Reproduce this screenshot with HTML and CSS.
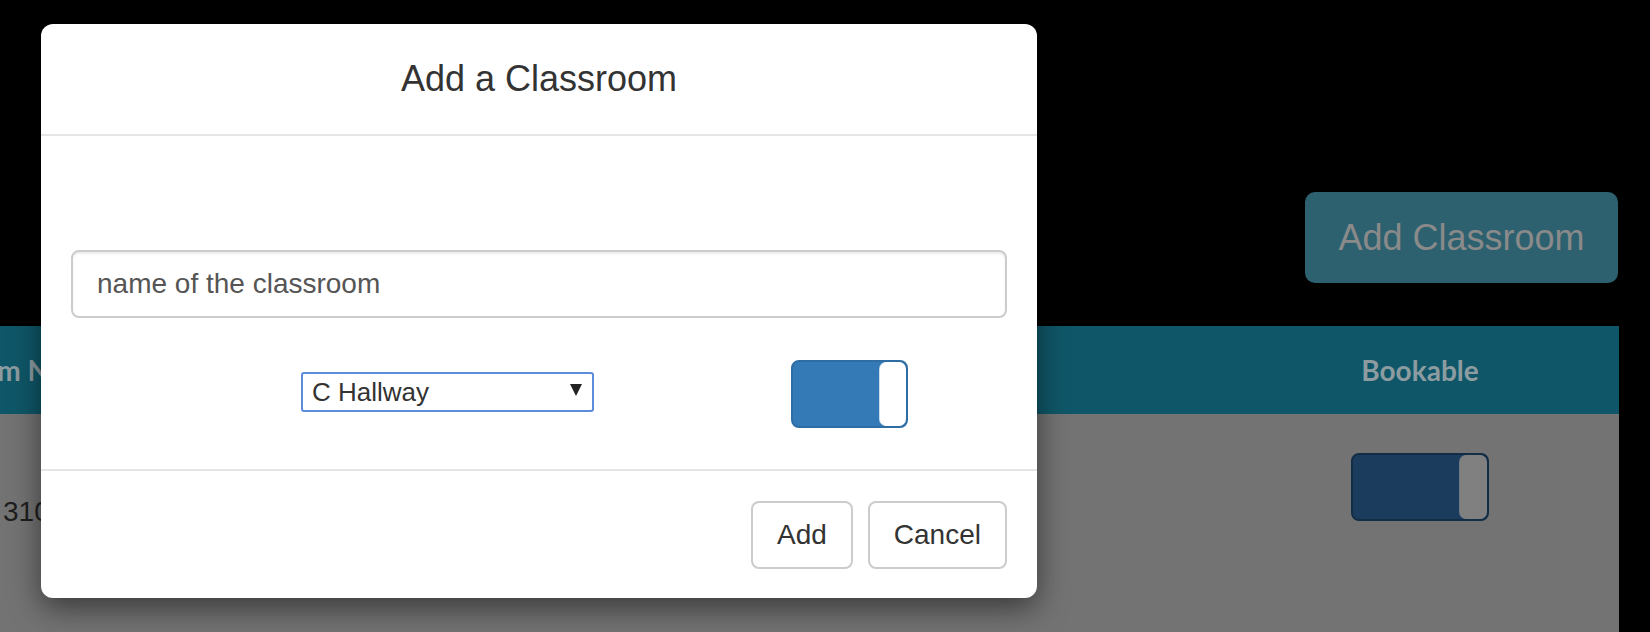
FILE: index.html
```html
<!DOCTYPE html>
<html>
<head>
<meta charset="utf-8">
<title>Add a Classroom</title>
<link rel="stylesheet" href="styles.css">
</head>
<body>
<div class="page">
  <div class="toolbar">
    <button class="add-btn">Add Classroom</button>
  </div>
  <div class="table">
    <div class="thead">
      <div class="th th-name">Room Name</div>
      <div class="th th-book">Bookable</div>
    </div>
    <div class="trow">
      <div class="td td-name">310</div>
      <div class="td td-book"><span class="bg-toggle"><span class="bg-knob"></span></span></div>
    </div>
  </div>
</div>

<div class="modal">
  <div class="modal-header">
    <h4 class="modal-title">Add a Classroom</h4>
  </div>
  <div class="modal-body">
    <div class="spacer"></div>
    <input class="form-control" type="text" value="name of the classroom">
    <div class="options-row">
      <div class="select-wrap">
        <select class="hall-select"><option>C Hallway</option></select>
      </div>
      <div class="toggle"><span class="knob"></span></div>
    </div>
  </div>
  <div class="modal-footer">
    <button class="btn">Add</button>
    <button class="btn">Cancel</button>
  </div>
</div>
</body>
</html>
```

FILE: styles.css
```css
* { box-sizing: border-box; }

html, body {
  margin: 0;
  padding: 0;
  background: #000;
  height: 100%;
  overflow: hidden;
}

body {
  font-family: "Liberation Sans", Arial, sans-serif;
  color: #333;
}

.page {
  width: 1619px;
  display: flex;
  flex-direction: column;
}

.toolbar {
  display: flex;
  justify-content: flex-end;
  padding-top: 192px;
  padding-right: 1px;
  margin-bottom: 43px;
}

.add-btn {
  width: 313px;
  height: 91px;
  border: none;
  border-radius: 10px;
  background: #2d6170;
  color: #8a8a8a;
  font-family: "Liberation Sans", Arial, sans-serif;
  font-size: 36px;
  padding: 0;
}

.table {
  display: flex;
  flex-direction: column;
}

.thead {
  height: 88px;
  background: #0f5768;
  display: grid;
  grid-template-columns: 1fr 398px;
  align-items: center;
}

.th {
  font-family: Lato, "Open Sans", sans-serif;
  font-weight: 700;
  font-size: 28px;
  color: #8c9ca1;
}

.th-name {
  text-indent: -52px;
  white-space: nowrap;
  overflow: hidden;
}

.th-book {
  text-align: center;
}

.trow {
  height: 240px;
  background: #737373;
  display: grid;
  grid-template-columns: 1fr 398px;
}

.td-name {
  padding-top: 78px;
  padding-left: 3px;
  font-size: 28px;
  line-height: 40px;
  color: #1e1e1e;
}

.td-book {
  display: flex;
  justify-content: center;
  align-items: flex-start;
  padding-top: 39px;
}

.bg-toggle {
  width: 138px;
  height: 68px;
  background: #1b3c5c;
  border: 2px solid #132d47;
  border-radius: 8px;
  display: flex;
  justify-content: flex-end;
}

.bg-knob {
  width: 27px;
  height: 100%;
  background: #808080;
  border-radius: 7px;
  box-shadow: -1px 0 0 #6f7a86;
}

/* Modal */
.modal {
  position: absolute;
  left: 41px;
  top: 24px;
  width: 996px;
  background: #fff;
  border-radius: 12px;
  box-shadow: 0 10px 30px rgba(0, 0, 0, 0.5);
}

.modal-header {
  padding: 30px;
  border-bottom: 2px solid #e5e5e5;
}

.modal-title {
  margin: 0;
  text-align: center;
  font-size: 36px;
  line-height: 50px;
  font-weight: 400;
  color: #333;
}

.modal-body {
  padding: 30px;
  padding-bottom: 30px;
}

.spacer {
  height: 84px;
}

.form-control {
  display: block;
  width: 100%;
  height: 68px;
  padding: 0 24px;
  font-family: "Liberation Sans", Arial, sans-serif;
  font-size: 28px;
  color: #555;
  background: #fff;
  border: 2px solid #ccc;
  border-radius: 8px;
  box-shadow: inset 0 2px 2px rgba(0, 0, 0, 0.075);
  outline: none;
}

.options-row {
  display: flex;
  align-items: flex-start;
  margin-top: 42px;
  margin-bottom: 11px;
  padding-left: 230px;
}

.select-wrap {
  position: relative;
  margin-top: 12px;
}

.select-wrap::after {
  content: "";
  position: absolute;
  right: 12px;
  top: 12px;
  width: 0;
  height: 0;
  border-left: 6.5px solid transparent;
  border-right: 6.5px solid transparent;
  border-top: 12px solid #222;
  pointer-events: none;
}

.hall-select {
  -webkit-appearance: none;
  appearance: none;
  display: block;
  width: 293px;
  height: 40px;
  padding: 0 0 0 9px;
  font-family: "Liberation Sans", Arial, sans-serif;
  font-size: 26px;
  color: #333;
  background: #fff;
  border: 2px solid #5b8dd8;
  border-radius: 3px;
  outline: none;
}

.toggle {
  margin-left: 197px;
  width: 117px;
  height: 68px;
  background: #337ab7;
  border: 2px solid #2e6da4;
  border-radius: 8px;
  display: flex;
  justify-content: flex-end;
}

.knob {
  width: 26px;
  height: 100%;
  background: #fff;
  border-radius: 7px;
  box-shadow: -1px 0 0 #c9dcee;
}

.modal-footer {
  display: flex;
  justify-content: flex-end;
  gap: 15px;
  padding: 30px 30px 29px;
  border-top: 2px solid #e5e5e5;
}

.btn {
  height: 68px;
  padding: 0 24px;
  font-family: "Liberation Sans", Arial, sans-serif;
  font-size: 28px;
  color: #333;
  background: #fff;
  border: 2px solid #ccc;
  border-radius: 8px;
}
```
